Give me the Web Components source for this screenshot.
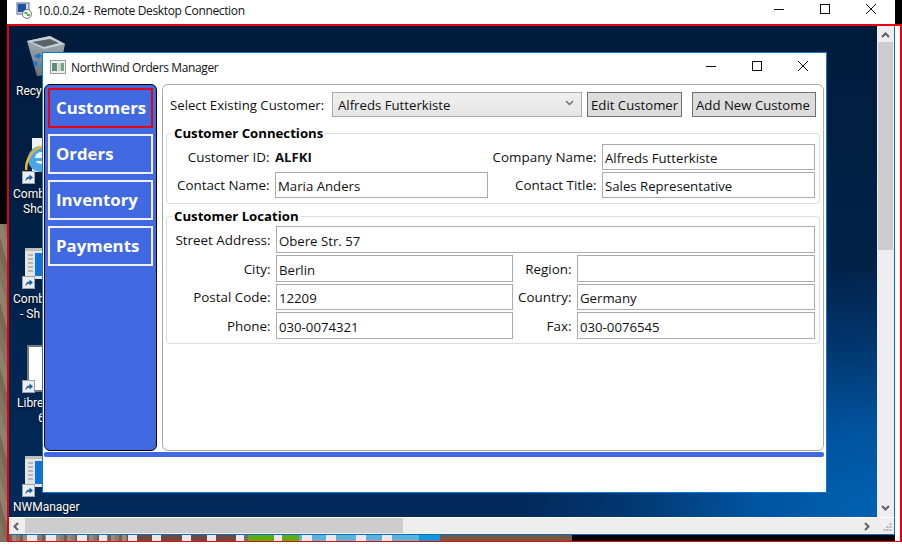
<!DOCTYPE html>
<html>
<head>
<meta charset="utf-8">
<title>10.0.0.24 - Remote Desktop Connection</title>
<style>
  html, body { margin: 0; padding: 0; background: #fff; overflow: hidden; }
  body { font-family: "Open Sans", "Noto Sans", sans-serif; }
</style>
</head>
<body>
<rdp-frame>
  <desktop-icon style="left:7px;top:7px" kind="bin" line1="Recy"></desktop-icon>
  <desktop-icon style="left:4px;top:110px" kind="ie" line1="Comb" line2="Sho" pad2="10"></desktop-icon>
  <desktop-icon style="left:4px;top:215px" kind="app" line1="Comb" line2="- Sh" pad2="7"></desktop-icon>
  <desktop-icon style="left:4px;top:319px" kind="doc" line1="Libre" pad1="4" line2="6" pad2="25"></desktop-icon>
  <desktop-icon style="left:4px;top:423px" kind="app" line1="NWManager"></desktop-icon>
  <orders-window style="left:33px;top:26px">
    <nav-button slot="nav" selected>Customers</nav-button>
    <nav-button slot="nav">Orders</nav-button>
    <nav-button slot="nav">Inventory</nav-button>
    <nav-button slot="nav">Payments</nav-button>
    <customer-form></customer-form>
  </orders-window>
</rdp-frame>

<script>
const CAPTION_GLYPHS = `
  <svg width="12" height="12" viewBox="0 0 12 12" fill="none" stroke="#111" stroke-width="1"><path d="M1 6.5h10"/></svg>
  <svg width="12" height="12" viewBox="0 0 12 12" fill="none" stroke="#111" stroke-width="1"><rect x="1.5" y="1.5" width="9" height="9"/></svg>
  <svg width="12" height="12" viewBox="0 0 12 12" fill="none" stroke="#111" stroke-width="1"><path d="M1 1l10 10M11 1L1 11"/></svg>`;

class CaptionButtons extends HTMLElement {
  constructor() {
    super();
    this.attachShadow({ mode: "open" });
    this.shadowRoot.innerHTML = `
      <style>
        :host { display: grid; grid-template-columns: repeat(3, 12px); column-gap: 34px; align-items: center; }
        svg { display: block; }
      </style>
      ${CAPTION_GLYPHS}`;
  }
}
customElements.define("caption-buttons", CaptionButtons);

class RdpFrame extends HTMLElement {
  constructor() {
    super();
    this.attachShadow({ mode: "open" });
    const strip = [[18,28],[37,47],[68,78],[90,98],[119,128],[143,152],[173,182],[198,207],[227,235],[265,273],[293,303],[317,327],[347,357],[373,383]]
      .map(([a, b]) => `transparent ${a}px, #e9e9e9 ${a}px, #e9e9e9 ${b}px, transparent ${b}px`).join(",");
    this.shadowRoot.innerHTML = `
      <style>
        :host { display: flex; position: relative; width: 902px; height: 542px; background: #fff; color: #000; }
        .left { width: 7px; background:
          linear-gradient(#000 0 224px, transparent 224px),
          repeating-linear-gradient(75deg, #84745f 0 6px, #786855 6px 11px, #8f806c 11px 17px); }
        .main { width: 888px; display: flex; flex-direction: column; }
        .right { width: 7px; background: linear-gradient(#000 0 24px, #fff 24px); }
        .title { height: 24px; flex: none; display: flex; align-items: center; background: #fff; font: 12px "Open Sans", sans-serif; letter-spacing: -.35px; color: #111; padding-left: 9px; }
        .title svg.ico { margin: -4px 5px 0 0; }
        .title span { flex: 1; padding-bottom: 4px; }
        .title caption-buttons { margin: -6px 18px 0 0; }
        .rule { height: 2px; flex: none; }
        .client { flex: none; height: 491px; display: flex; margin-left: 2px; }
        .desktop { position: relative; width: 868px; height: 491px; overflow: hidden;
          background:
            radial-gradient(ellipse 360px 250px at 100% 100%, #0062b2 0, #01539e 35%, rgba(1,64,126,.6) 70%, transparent 100%),
            linear-gradient(#011b3b, #02244d 60%, #022a5a); }
        .vbar { width: 17px; background: #eee; border-right: 1px solid #0a6cc4; position: relative; display: flex; flex-direction: column; align-items: center; }
        .vbar .thumb { margin-top: 16px; width: 15px; height: 208px; background: #cdcdcd; }
        .arrow { position: absolute; }
        .hrow { flex: none; height: 17px; margin-left: 2px; display: flex; background: #eee; border-top: 1px solid #fff; box-sizing: border-box; position: relative; border-right: 1px solid #0a6cc4; }
        .hthumb { margin-left: 16px; width: 378px; height: 15px; background: #cdcdcd; }
        .bline { height: 1px; flex: none; background: #0a6cc4; margin-left: 2px; }
        .strip { height: 6px; flex: none; margin-left: 2px;
          background:
            linear-gradient(90deg, ${strip}),
            repeating-linear-gradient(90deg, rgba(60,45,30,.35) 0 3px, rgba(255,255,255,.12) 3px 7px, transparent 7px 11px) 0 0 / 118px 100% no-repeat,
            linear-gradient(90deg, #8b7b68 0 118px, #6f4a3c 118px 228px, #7a6d5c 228px 239px, #5aae10 239px 290px, #5ab6d8 290px 410px, #0f9ad6 410px 431px, #75583f 431px 563px, #000 563px); }
        .frame { position: absolute; left: 7px; top: 24px; right: 0; bottom: 0; border: 2px solid #e8000c; border-width: 2px 2px 1px 2px; pointer-events: none; }
        .grip { position: absolute; right: 2px; bottom: 2px; }
      </style>
      <div class="left"></div>
      <div class="main">
        <div class="title">
          <svg class="ico" width="16" height="17" viewBox="0 0 16 17">
            <rect x="1" y="1" width="12" height="11" fill="#d8dce4" stroke="#56688c"/>
            <rect x="2" y="2" width="8" height="8" fill="#1d4fa8"/>
            <circle cx="11" cy="12" r="4.5" fill="#f4f4f4" stroke="#7a7a7a"/>
            <path d="M8.5 11h3M11 13h3" stroke="#2a9a2a" stroke-width="1.3"/>
          </svg>
          <span>10.0.0.24 - Remote Desktop Connection</span>
          <caption-buttons></caption-buttons>
        </div>
        <div class="rule"></div>
        <div class="client">
          <div class="desktop"><slot></slot></div>
          <div class="vbar">
            <svg class="arrow" style="top:6px" width="9" height="6" viewBox="0 0 9 6" fill="none" stroke="#606060" stroke-width="2"><path d="M1 5l3.500-3.500L8 5"/></svg>
            <div class="thumb"></div>
            <svg class="arrow" style="bottom:6px" width="9" height="6" viewBox="0 0 9 6" fill="none" stroke="#606060" stroke-width="2"><path d="M1 1l3.500 3.500L8 1"/></svg>
          </div>
        </div>
        <div class="hrow">
          <svg class="arrow" style="left:4px;top:4px" width="6" height="9" viewBox="0 0 6 9" fill="none" stroke="#606060" stroke-width="2"><path d="M5 1L1.500 4.500 5 8"/></svg>
          <div class="hthumb"></div>
          <svg class="arrow" style="left:855px;top:4px" width="6" height="9" viewBox="0 0 6 9" fill="none" stroke="#606060" stroke-width="2"><path d="M1 1l3.500 3.500L1 8"/></svg>
          <svg class="grip" width="9" height="9" viewBox="0 0 9 9" fill="#b4b4b4"><path d="M6.500 0h2v2h-2zM3.500 3h2v2h-2zM6.500 3h2v2h-2zM.5 6h2v2h-2zM3.500 6h2v2h-2zM6.500 6h2v2h-2z"/></svg>
        </div>
        <div class="bline"></div>
        <div class="strip"></div>
      </div>
      <div class="right"></div>
      <div class="frame"></div>`;
  }
}
customElements.define("rdp-frame", RdpFrame);

const SHORTCUT = `<svg class="sc" width="13" height="13" viewBox="0 0 13 13">
  <rect x=".5" y=".5" width="12" height="12" fill="#e9eef3" stroke="#9aa3ad"/>
  <path d="M3.500 10.500C3.500 7 5 5.500 7.500 5.500V3.500L11 6.500 7.500 9.500V7.500C5.500 7.500 4.500 8.500 3.500 10.500z" fill="#1f5c9e"/></svg>`;

// art is placed from the top of the 48px icon box
const DESKTOP_ART = {
  bin: { left: 11, top: 3, svg: `<svg width="38" height="40" viewBox="0 0 38 40">
    <defs><linearGradient id="b" x1="0" y1="0" x2="0" y2="1"><stop offset="0" stop-color="#a7b1b8"/><stop offset="1" stop-color="#68737d"/></linearGradient></defs>
    <path d="M0 5L23 0l15 8-6 30-22 2z" fill="url(#b)"/>
    <path d="M0 5L23 0l15 8-21 5z" fill="#c9d0d5"/>
    <path d="M5 6l18-3 9 4-15 4z" fill="#59636b"/>
    <path d="M7 20l5-3 3 3-4 3zM6 25l5 1-1 5-3-2zM15 26l4-1-2 6-3-1z" fill="#1e79c8"/></svg>` },
  ie: { left: 12, top: 2, svg: `<svg width="36" height="38" viewBox="0 0 36 38">
    <rect x="7" y="0" width="29" height="34" fill="#f1f1f1"/>
    <circle cx="16" cy="21" r="13" fill="#4ba6e6"/>
    <circle cx="16" cy="20" r="6" fill="#e9f4fb"/>
    <rect x="6" y="20" width="20" height="3" fill="#4ba6e6"/>
    <path d="M1 32C1 18 11 6 26 8" fill="none" stroke="#f0b429" stroke-width="2.500"/></svg>` },
  app: { left: 12, top: 7, svg: `<svg width="36" height="31" viewBox="0 0 36 31">
    <rect x="0" y="0" width="36" height="31" fill="#e4e4e4"/>
    <rect x="0" y="0" width="36" height="3" fill="#bdbdbd"/>
    <path d="M3 7h5M3 11h5M3 15h5M3 19h5M3 23h5" stroke="#888" stroke-width="1.200"/>
    <rect x="10" y="5" width="26" height="23" fill="#0f74d6"/></svg>` },
  doc: { left: 14, top: 0, svg: `<svg width="30" height="47" viewBox="0 0 30 47">
    <rect x="1" y="1" width="29" height="45" fill="#fff" stroke="#777" stroke-width="2"/></svg>` }
};

class DesktopIcon extends HTMLElement {
  constructor() {
    super();
    this.attachShadow({ mode: "open" });
  }
  connectedCallback() {
    const art = DESKTOP_ART[this.getAttribute("kind")];
    const line2 = this.getAttribute("line2");
    this.shadowRoot.innerHTML = `
      <style>
        :host { display: block; position: absolute; width: 90px; color: #fff; font: 12px/15px Roboto, sans-serif; text-shadow: 0 1px 2px #000; }
        .art { position: relative; height: 48px; margin-bottom: 3px; }
        .art svg { display: block; position: absolute; }
        .art svg:first-child { left: ${art.left}px; top: ${art.top}px; }
        .sc { left: 9px; bottom: 0; }
        .t { white-space: nowrap; }
      </style>
      <div class="art">${art.svg}${this.getAttribute("kind") === "bin" ? "" : SHORTCUT}</div>
      <div class="t" style="padding-left:${this.getAttribute("pad1") || 0}px">${this.getAttribute("line1")}</div>
      ${line2 ? `<div class="t" style="padding-left:${this.getAttribute("pad2") || 0}px">${line2}</div>` : ""}`;
  }
}
customElements.define("desktop-icon", DesktopIcon);

class OrdersWindow extends HTMLElement {
  constructor() {
    super();
    this.attachShadow({ mode: "open" });
    this.shadowRoot.innerHTML = `
      <style>
        :host { display: flex; flex-direction: column; position: absolute; box-sizing: border-box; width: 785px; height: 441px; background: #fff; border: 1px solid #0a78d4; font: 13.2px "Open Sans", sans-serif; color: #111; }
        .cap { height: 31px; flex: none; display: flex; align-items: center; padding-left: 7px; font-size: 12px; letter-spacing: -.38px; }
        .cap svg.ico { margin-top: -4px; }
        .cap span { flex: 1; margin-left: 5px; padding-bottom: 2px; }
        .cap caption-buttons { margin: -5px 17px 0 0; }
        .body { height: 367px; flex: none; display: flex; gap: 5px; padding: 0 2px 0 1px; }
        .side { width: 113px; box-sizing: border-box; background: #4169e1; border: 1px solid #000; border-radius: 6px; padding: 3px 3px; display: flex; flex-direction: column; gap: 6px; }
        .panel { flex: 1; box-sizing: border-box; background: #fff; border: 1px solid #aaa; border-radius: 6px; padding: 7px 3px 0 3px; }
        .bar { margin: 1px 2px 0 1px; height: 5px; flex: none; background: #4169e1; border-radius: 2px; }
      </style>
      <div class="cap">
        <svg class="ico" width="16" height="14" viewBox="0 0 16 14">
          <rect x=".5" y=".5" width="15" height="13" fill="#eef0ee" stroke="#9a9a9a"/>
          <rect x="2" y="3" width="5" height="8" fill="#5f8a7c"/><rect x="8" y="3" width="3" height="8" fill="#c8d4cc"/><rect x="11" y="3" width="3" height="8" fill="#7ba288"/>
        </svg>
        <span>NorthWind Orders Manager</span>
        <caption-buttons></caption-buttons>
      </div>
      <div class="body">
        <div class="side"><slot name="nav"></slot></div>
        <div class="panel"><slot></slot></div>
      </div>
      <div class="bar"></div>`;
  }
}
customElements.define("orders-window", OrdersWindow);

class NavButton extends HTMLElement {
  constructor() {
    super();
    this.attachShadow({ mode: "open" });
    this.shadowRoot.innerHTML = `
      <style>
        :host { display: flex; align-items: center; box-sizing: border-box; width: 105px; height: 40px; border: 2px solid #f0f0f8; padding: 0 0 2px 6px; color: #fff; font: 700 16.8px "Open Sans", sans-serif; }
        :host([selected]) { border-color: #e8000c; }
      </style>
      <slot></slot>`;
  }
}
customElements.define("nav-button", NavButton);

class GroupBox extends HTMLElement {
  constructor() {
    super();
    this.attachShadow({ mode: "open" });
  }
  connectedCallback() {
    this.shadowRoot.innerHTML = `
      <style>
        :host { display: block; }
        fieldset { margin: 0; padding: 0; border: 1px solid #d5dfe5; border-radius: 4px; min-width: 0; }
        legend { margin-left: 5px; padding: 0 2px; font-weight: 700; line-height: 16px; color: #000; }
      </style>
      <fieldset>
        <legend>${this.getAttribute("label")}</legend>
        <slot></slot>
      </fieldset>`;
  }
}
customElements.define("group-box", GroupBox);

class TextField extends HTMLElement {
  constructor() {
    super();
    this.attachShadow({ mode: "open" });
    this.shadowRoot.innerHTML = `
      <style>
        :host { display: flex; align-items: center; box-sizing: border-box; border: 1px solid #ababab; background: #fff; padding: 2px 0 0 2px; white-space: nowrap; min-height: 0; }
      </style>
      <slot></slot>`;
  }
}
customElements.define("text-field", TextField);

class FieldLabel extends HTMLElement {
  constructor() {
    super();
    this.attachShadow({ mode: "open" });
    this.shadowRoot.innerHTML = `
      <style>
        :host { display: flex; align-items: center; justify-content: flex-end; padding-right: 5.5px; font-size: 13.4px; white-space: nowrap; }
      </style>
      <slot></slot>`;
  }
}
customElements.define("field-label", FieldLabel);

class ComboPick extends HTMLElement {
  constructor() {
    super();
    this.attachShadow({ mode: "open" });
    this.shadowRoot.innerHTML = `
      <style>
        :host { display: flex; align-items: center; box-sizing: border-box; border: 1px solid #acacac; background: linear-gradient(#f0f0f0, #e5e5e5); padding: 0 7px 0 5px; }
        .v { flex: 1; }
        svg { margin-bottom: 3px; }
      </style>
      <span class="v"><slot></slot></span>
      <svg width="9" height="6" viewBox="0 0 9 6" fill="none" stroke="#707070" stroke-width="1.500"><path d="M1 1l3.500 3.500L8 1"/></svg>`;
  }
}
customElements.define("combo-pick", ComboPick);

class PlainButton extends HTMLElement {
  constructor() {
    super();
    this.attachShadow({ mode: "open" });
    this.shadowRoot.innerHTML = `
      <style>
        :host { display: flex; align-items: center; box-sizing: border-box; border: 1px solid #707070; background: #ddd; padding-left: 3px; overflow: hidden; white-space: nowrap; }
      </style>
      <slot></slot>`;
  }
}
customElements.define("plain-button", PlainButton);

class CustomerForm extends HTMLElement {
  constructor() {
    super();
    this.attachShadow({ mode: "open" });
    this.shadowRoot.innerHTML = `
      <style>
        :host { display: block; }
        .tools { display: flex; height: 25px; padding-left: 4px; }
        .tools .lbl { display: flex; align-items: center; width: 162px; }
        .tools combo-pick { width: 250px; }
        .tools plain-button.edit { margin-left: 5px; width: 95px; }
        .tools plain-button.add { margin-left: 10px; width: 124px; }
        .g1 { margin-top: 8px; }
        .g2 { margin-top: 4px; }
        .grid1 { display: grid; grid-template-columns: 108px 213px 114px 213px; grid-template-rows: 26px 26px; row-gap: 2px; padding: 3px 0 5px; }
        .grid2 { display: grid; grid-template-columns: 109px 237px 64px 238px; grid-template-rows: 27px 27px 26px 27px; row-gap: 2px; padding: 2px 0 4px; }
        .wide { grid-column: 2 / 5; }
        .id { display: flex; align-items: center; font-weight: 700; }
      </style>
      <div class="tools">
        <span class="lbl">Select Existing Customer:</span>
        <combo-pick>Alfreds Futterkiste</combo-pick>
        <plain-button class="edit">Edit Customer</plain-button>
        <plain-button class="add">Add New Custome</plain-button>
      </div>
      <group-box class="g1" label="Customer Connections">
        <div class="grid1">
          <field-label>Customer ID:</field-label><div class="id">ALFKI</div>
          <field-label>Company Name:</field-label><text-field>Alfreds Futterkiste</text-field>
          <field-label>Contact Name:</field-label><text-field>Maria Anders</text-field>
          <field-label>Contact Title:</field-label><text-field>Sales Representative</text-field>
        </div>
      </group-box>
      <group-box class="g2" label="Customer Location">
        <div class="grid2">
          <field-label>Street Address:</field-label><text-field class="wide">Obere Str. 57</text-field>
          <field-label>City:</field-label><text-field>Berlin</text-field>
          <field-label>Region:</field-label><text-field></text-field>
          <field-label>Postal Code:</field-label><text-field>12209</text-field>
          <field-label>Country:</field-label><text-field>Germany</text-field>
          <field-label>Phone:</field-label><text-field>030-0074321</text-field>
          <field-label>Fax:</field-label><text-field>030-0076545</text-field>
        </div>
      </group-box>`;
  }
}
customElements.define("customer-form", CustomerForm);
</script>
</body>
</html>
